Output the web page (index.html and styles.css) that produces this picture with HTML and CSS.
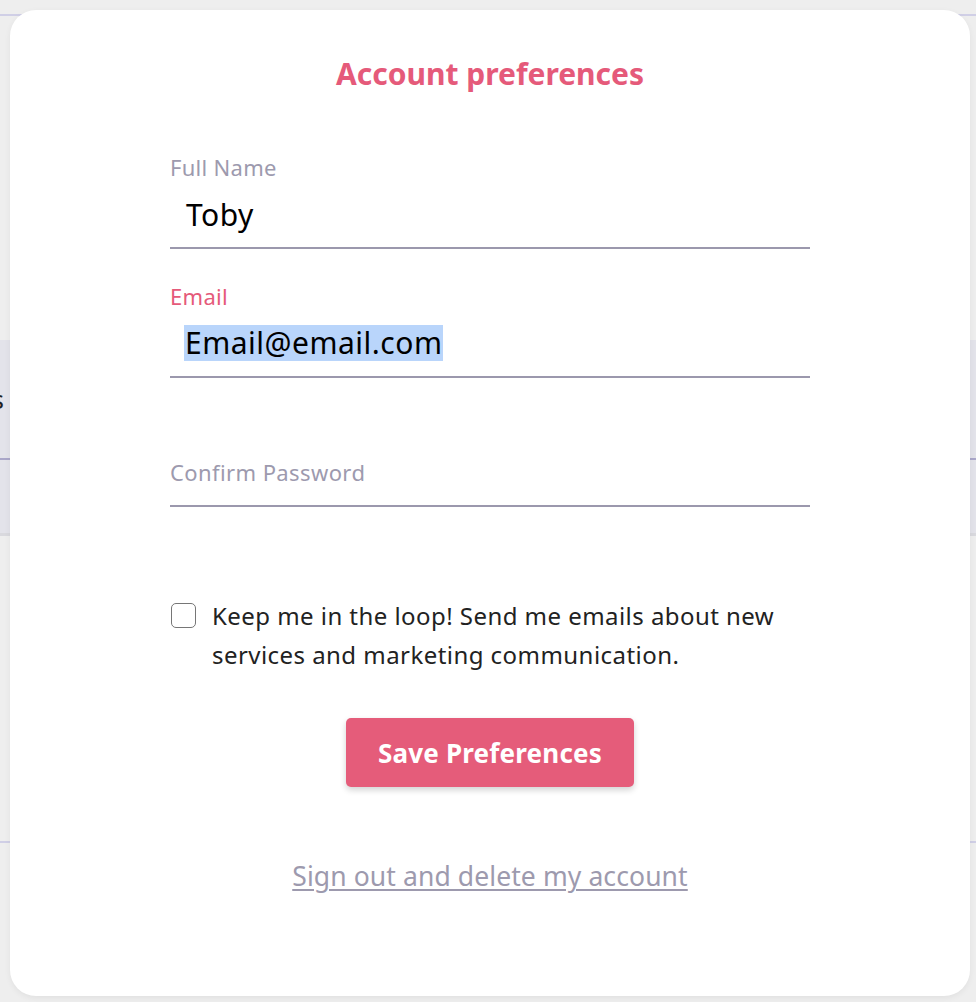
FILE: index.html
```html
<!DOCTYPE html>
<html lang="en">
<head>
<meta charset="utf-8">
<title>Account preferences</title>
<link rel="stylesheet" href="styles.css">
</head>
<body>
<div class="page">
  <div class="page-top"></div>
  <div class="page-band">
    <div class="band-upper"><span class="band-text">Settings</span></div>
    <div class="band-lower"></div>
  </div>
  <div class="page-rule"></div>
</div>

<div class="modal">
  <h1 class="title">Account preferences</h1>
  <form class="form">
    <div class="field">
      <div class="label">Full Name</div>
      <div class="value">Toby</div>
    </div>
    <div class="field">
      <div class="label label-active">Email</div>
      <div class="value"><span class="selected">Email@email.com</span></div>
    </div>
    <div class="field field-empty">
      <div class="value placeholder">Confirm Password</div>
    </div>
    <label class="check-row">
      <span class="checkbox"></span>
      <span class="check-text">Keep me in the loop! Send me emails about new services and marketing communication.</span>
    </label>
    <div class="actions">
      <button type="button" class="btn">Save Preferences</button>
    </div>
    <div class="link-row">
      <a class="link" href="#">Sign out and delete my account</a>
    </div>
  </form>
</div>
</body>
</html>
```

FILE: styles.css
```css
* { box-sizing: border-box; }
html, body { margin: 0; padding: 0; }
body {
  background: #eeeeee;
  font-family: "Noto Sans", "Open Sans", sans-serif;
  width: 976px;
  height: 1002px;
  overflow: hidden;
  position: relative;
}

/* dimmed page behind the modal */
.page { width: 100%; }
.page-top {
  height: 16px;
  border-bottom: 2px solid #d0cfe6;
}
.page-band {
  margin-top: 324px;
}
.band-upper {
  height: 120px;
  background: #e3e3ea;
  border-bottom: 2px solid #aaa7c9;
  display: flex;
  align-items: center;
}
.band-text {
  font-size: 26px;
  color: #222;
  margin-left: -95px;
}
.band-lower {
  height: 76px;
  background: #e3e3ea;
  border-bottom: 3px solid #d9d9de;
}
.page-rule {
  margin-top: 305px;
  border-bottom: 2px solid #d0cfe6;
}

/* modal */
.modal {
  position: absolute;
  left: 10px;
  top: 10px;
  width: 960px;
  height: 986px;
  background: #ffffff;
  border-radius: 26px;
  box-shadow: 0 2px 6px rgba(0,0,0,0.06);
  display: flex;
  flex-direction: column;
  align-items: center;
}
.title {
  margin: 44px 0 0;
  font-size: 30px;
  line-height: 40px;
  font-weight: 700;
  color: #e55a7a;
}
.form {
  width: 640px;
  margin-top: 61px;
  display: flex;
  flex-direction: column;
}
.field {
  display: flex;
  flex-direction: column;
  margin-bottom: 35px;
}
.label {
  font-size: 22px;
  line-height: 24px;
  color: #9d9aae;
  letter-spacing: 0.3px;
}
.label-active { color: #e55a7a; }
.value {
  height: 68px;
  margin-top: 2px;
  padding-left: 16px;
  display: flex;
  align-items: center;
  font-size: 30px;
  letter-spacing: 0.5px;
  color: #000;
  border-bottom: 2px solid #9b98ad;
}
.selected {
  background: #b9d5fb;
  line-height: 36px;
  padding: 0 1px;
  margin-left: -2px;
}
.field-empty { margin-top: 26px; }
.field-empty .value { margin-top: 0; }
.placeholder {
  padding-left: 0;
  font-size: 22px;
  color: #9d9aae;
  letter-spacing: 0.4px;
}

.check-row {
  display: flex;
  align-items: flex-start;
  gap: 16px;
  margin-top: 54px;
  cursor: pointer;
}
.checkbox {
  flex: 0 0 auto;
  width: 25px;
  height: 25px;
  border: 1.5px solid #767676;
  border-radius: 5px;
  margin-top: 7px;
  margin-left: 1px;
}
.check-text {
  font-size: 24px;
  line-height: 39px;
  letter-spacing: 0.45px;
  color: #222222;
}
.actions {
  display: flex;
  justify-content: center;
  margin-top: 44px;
}
.btn {
  width: 288px;
  height: 69px;
  border: none;
  border-radius: 5px;
  background: #e55c7a;
  color: #ffffff;
  font-family: inherit;
  font-size: 26px;
  letter-spacing: 0.2px;
  font-weight: 700;
  box-shadow: 0 3px 6px rgba(0,0,0,0.18);
  cursor: pointer;
}
.link-row {
  display: flex;
  justify-content: center;
  margin-top: 73px;
}
.link {
  font-size: 26.5px;
  line-height: 32px;
  letter-spacing: 0.1px;
  color: #9d9aae;
  text-decoration: underline;
  text-underline-offset: 3px;
  text-decoration-thickness: 2px;
}
```
